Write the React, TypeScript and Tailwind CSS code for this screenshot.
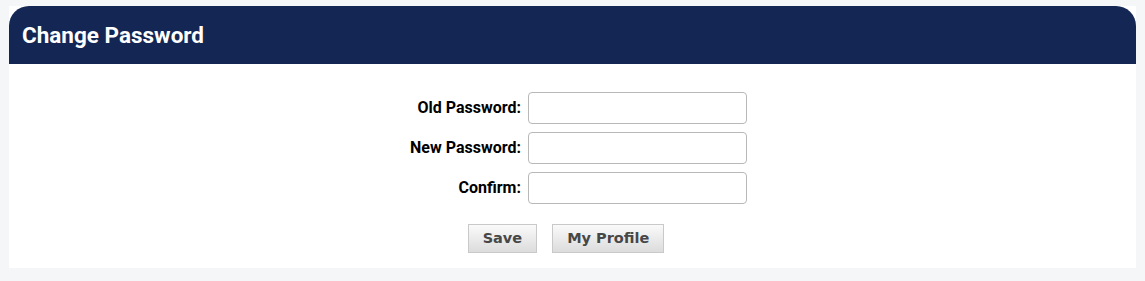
const labelStyles = "text-right text-[16px] font-bold text-black pr-[7px] whitespace-nowrap"
const inputStyles = "w-[219px] h-[32px] rounded-[4px] border border-[#b8b8b8] bg-white px-2 text-[14px] outline-none"
const buttonStyles = "h-[29px] px-[14px] border border-[#c9c9c9] bg-gradient-to-b from-[#fafafa] to-[#dcdcdc] text-[14.5px] font-bold text-[#474747] [font-family:'DejaVu_Sans',Verdana,sans-serif]"

const fields = [
    { label: "Old Password:", name: "old" },
    { label: "New Password:", name: "new" },
    { label: "Confirm:", name: "confirm" },
]

export default function App() {
    return (
        <div className="min-h-[281px] w-full bg-[#f5f6f8] pt-[6px] px-[9px] [font-family:Roboto,'Liberation_Sans',sans-serif]">
            <div className="bg-white">
                {/* Header */}
                <div className="h-[58px] bg-[#142653] rounded-t-[20px] flex items-center pl-[13px]">
                    <h1 className="text-white text-[22.5px] font-bold leading-none">Change Password</h1>
                </div>

                {/* Form */}
                <div className="pt-[28px] pb-[15px] flex flex-col items-center">
                    <div className="grid grid-cols-[auto_auto] items-center gap-y-[8px] ml-[12px]">
                        {fields.map((f) => (
                            <div key={f.name} className="contents">
                                <label className={labelStyles}>{f.label}</label>
                                <input type="password" className={inputStyles} />
                            </div>
                        ))}
                    </div>
                    <div className="flex gap-[15px] mt-[20px] ml-[-13px]">
                        <button className={buttonStyles}>Save</button>
                        <button className={buttonStyles}>My Profile</button>
                    </div>
                </div>
            </div>
        </div>
    )
}
